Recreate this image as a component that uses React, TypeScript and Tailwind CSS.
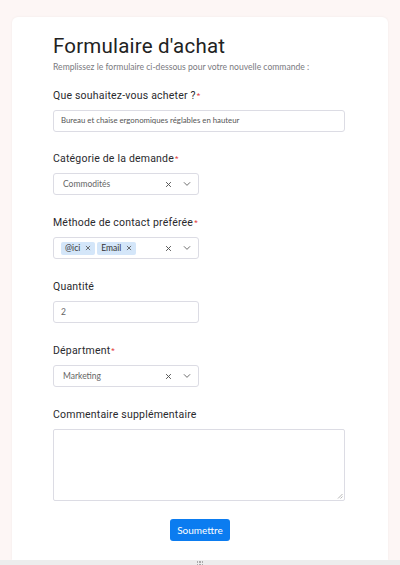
import React from 'react';

const labelFont = { fontFamily: 'Roboto, "Liberation Sans", sans-serif' };
const bodyFont = { fontFamily: 'Lato, "Liberation Sans", sans-serif' };

const Label = ({ text, required }: { text: string; required?: boolean }) => (
  <div className="text-[10.5px] leading-[16px] font-normal text-[#2a2a2e] mb-[6px] tracking-[0.2px]" style={labelFont}>
    {text}
    {required && <span className="text-[#e23a3a] text-[8px] align-top ml-[1px]">*</span>}
  </div>
);

const Cross = ({ size = 7 }: { size?: number }) => (
  <svg width={size} height={size} viewBox="0 0 10 10" className="text-[#555]">
    <path d="M2 2l6 6M8 2l-6 6" stroke="currentColor" strokeWidth="1.4" strokeLinecap="round" />
  </svg>
);

const Chevron = () => (
  <svg width="8" height="6" viewBox="0 0 10 6" className="text-[#666]">
    <path d="M1.5 1.2l3.5 3.5 3.5-3.5" fill="none" stroke="currentColor" strokeWidth="1.2" strokeLinecap="round" />
  </svg>
);

const SelectBox = ({ children }: { children: React.ReactNode }) => (
  <div className="w-[146px] h-[22px] border border-[#dcdce4] rounded-[3px] bg-white flex items-center pl-[7px] pr-[6px]">
    <div className="flex-1 flex items-center gap-[2px] min-w-0">{children}</div>
    <div className="flex items-center w-[12px] justify-center mr-[8px]"><Cross /></div>
    <div className="flex items-center w-[10px] justify-center"><Chevron /></div>
  </div>
);

const Chip = ({ text }: { text: string }) => (
  <span className="h-[13px] px-[4px] rounded-[2px] bg-[#d4e6f9] text-[8.5px] text-[#333] flex items-center gap-[5px]" style={bodyFont}>
    {text}
    <Cross size={6} />
  </span>
);

export default function App() {
  return (
    <div className="w-[400px] h-[565px] bg-[#fdf6f5] overflow-hidden flex flex-col">
      <div className="mx-[12px] mt-[17px] flex-1 bg-white rounded-t-[6px] shadow-[0_0_3px_rgba(0,0,0,0.05)] pl-[41px] pr-[41px] pt-[17px]">
        <h1 className="text-[20.5px] leading-[24px] text-[#222] tracking-[0.2px]" style={labelFont}>Formulaire d'achat</h1>
        <p className="mt-[2px] text-[8.6px] leading-[14px] text-[#7a7a80] whitespace-nowrap" style={bodyFont}>
          Remplissez le formulaire ci-dessous pour votre nouvelle commande :
        </p>

        <div className="mt-[14px]">
          <Label text="Que souhaitez-vous acheter ?" required />
          <div className="w-[292px] h-[22px] border border-[#dcdce4] rounded-[3px] flex items-center px-[7px] text-[7.8px] text-[#555]" style={bodyFont}>
            Bureau et chaise ergonomiques réglables en hauteur
          </div>
        </div>

        <div className="mt-[19px]">
          <Label text="Catégorie de la demande" required />
          <SelectBox>
            <span className="text-[8.5px] text-[#666] pl-[2px]" style={bodyFont}>Commodités</span>
          </SelectBox>
        </div>

        <div className="mt-[20px]">
          <Label text="Méthode de contact préférée" required />
          <SelectBox>
            <Chip text="@ici" />
            <Chip text="Email" />
          </SelectBox>
        </div>

        <div className="mt-[20px]">
          <Label text="Quantité" />
          <div className="w-[146px] h-[22px] border border-[#dcdce4] rounded-[3px] flex items-center px-[7px] text-[8.5px] text-[#666]" style={bodyFont}>
            2
          </div>
        </div>

        <div className="mt-[20px]">
          <Label text="Départment" required />
          <SelectBox>
            <span className="text-[8.5px] text-[#666] pl-[2px]" style={bodyFont}>Marketing</span>
          </SelectBox>
        </div>

        <div className="mt-[20px]">
          <Label text="Commentaire supplémentaire" />
          <div className="relative w-[292px] h-[72px] border border-[#dcdce4] rounded-[2px]">
            <svg width="6" height="6" viewBox="0 0 6 6" className="absolute right-[1px] bottom-[1px] text-[#999]">
              <path d="M5.5 1L1 5.5M5.5 3.5L3.5 5.5" stroke="currentColor" strokeWidth="0.7" />
            </svg>
          </div>
        </div>

        <div className="mt-[18px] flex justify-center">
          <button className="w-[60px] h-[22px] rounded-[3px] bg-[#0b7cf0] text-white text-[10px]" style={bodyFont}>
            Soumettre
          </button>
        </div>
      </div>
      <div className="h-[5px] bg-[#ededed] flex justify-center items-start pt-[1px]">
        <div className="grid grid-cols-3 gap-[1px]">
          {Array.from({ length: 6 }).map((_, i) => (
            <span key={i} className="w-[1.5px] h-[1.5px] bg-[#aaa]" />
          ))}
        </div>
      </div>
    </div>
  );
}
